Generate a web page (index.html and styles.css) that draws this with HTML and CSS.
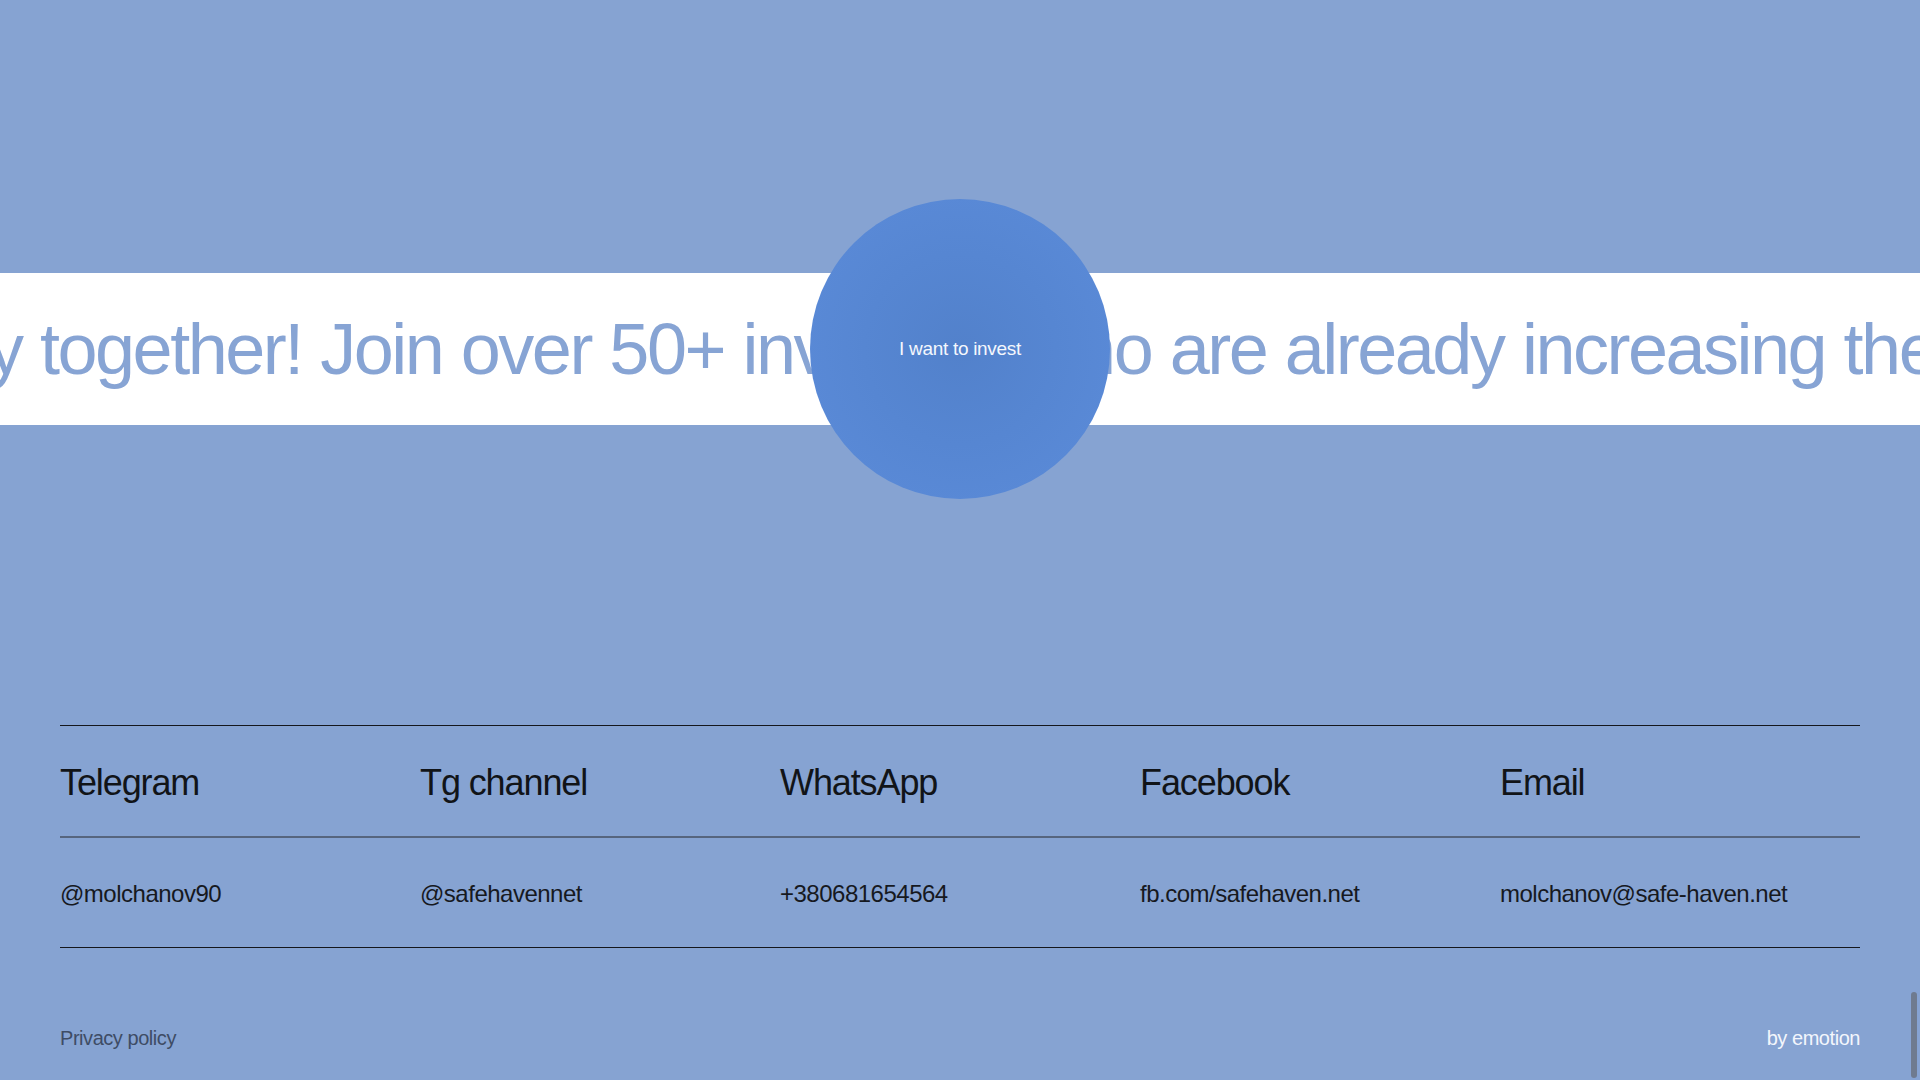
FILE: index.html
```html
<!DOCTYPE html>
<html lang="en">
<head>
<meta charset="utf-8">
<title>Safe Haven — Contacts</title>
<link rel="stylesheet" href="styles.css">
</head>
<body>
<main class="page">
  <section class="hero">
    <div class="band">
      <div class="marquee">
        <span class="marquee-text">y together! Join over 50+ investors who are already increasing their capital with us. Let's make money together!</span>
      </div>
      <a class="invest" href="#">I want to invest</a>
    </div>
  </section>
  <footer class="footer">
    <div class="contacts">
      <div class="cell head">Telegram</div>
      <div class="cell head">Tg channel</div>
      <div class="cell head">WhatsApp</div>
      <div class="cell head">Facebook</div>
      <div class="cell head">Email</div>
      <div class="cell value">@molchanov90</div>
      <div class="cell value">@safehavennet</div>
      <div class="cell value">+380681654564</div>
      <div class="cell value">fb.com/safehaven.net</div>
      <div class="cell value">molchanov@safe-haven.net</div>
    </div>
    <div class="bottom">
      <a class="privacy" href="#">Privacy policy</a>
      <a class="credit" href="#">by emotion</a>
    </div>
  </footer>
</main>
<div class="scroll-thumb"></div>
</body>
</html>
```
FILE: styles.css
```css
* { box-sizing: border-box; }
html, body {
  margin: 0;
  padding: 0;
}
body {
  width: 1920px;
  height: 1080px;
  overflow: hidden;
  background: #86a3d2;
  font-family: "Liberation Sans", Arial, Helvetica, sans-serif;
  color: #111418;
}
a { text-decoration: none; color: inherit; }

.page {
  display: flex;
  flex-direction: column;
}

.hero {
  height: 725px;
  padding-top: 273px;
}

.band {
  position: relative;
  height: 152px;
  background: #ffffff;
}

.marquee {
  height: 100%;
  overflow: hidden;
  display: flex;
  align-items: center;
  white-space: nowrap;
}

.marquee-text {
  display: block;
  margin-left: -12px;
  font-size: 72px;
  letter-spacing: -2.5px;
  word-spacing: 1px;
  color: #87a4d4;
}

.invest {
  position: absolute;
  left: 810px;
  top: -74px;
  width: 300px;
  height: 300px;
  border-radius: 50%;
  background: radial-gradient(circle at 50% 50%, #5281cb 0%, #5686d2 45%, #5c8cda 100%);
  display: flex;
  align-items: center;
  justify-content: center;
  color: #f4f7fd;
  font-size: 19px;
  letter-spacing: -0.3px;
}

.footer {
  padding: 0 60px;
}

.contacts {
  display: grid;
  grid-template-columns: repeat(5, 1fr);
  border-top: 1px solid #15171c;
  border-bottom: 1px solid #15171c;
}

.cell {
  display: flex;
  align-items: center;
}

.head {
  height: 112px;
  font-size: 36px;
  letter-spacing: -1.1px;
  border-bottom: 2px solid #56657e;
  padding-top: 3px;
}

.value {
  height: 109px;
  font-size: 24px;
  letter-spacing: -0.5px;
  color: #16191f;
  padding-top: 3px;
}

.bottom {
  display: flex;
  justify-content: space-between;
  align-items: center;
  padding-top: 79px;
  font-size: 20px;
  letter-spacing: -0.45px;
  line-height: 22px;
}

.privacy { color: #3e4c65; }
.credit { color: #f3f6fc; }

.scroll-thumb {
  position: fixed;
  right: 3px;
  bottom: 2px;
  width: 6px;
  height: 86px;
  border-radius: 3px;
  background: #6f7b8f;
}
```
